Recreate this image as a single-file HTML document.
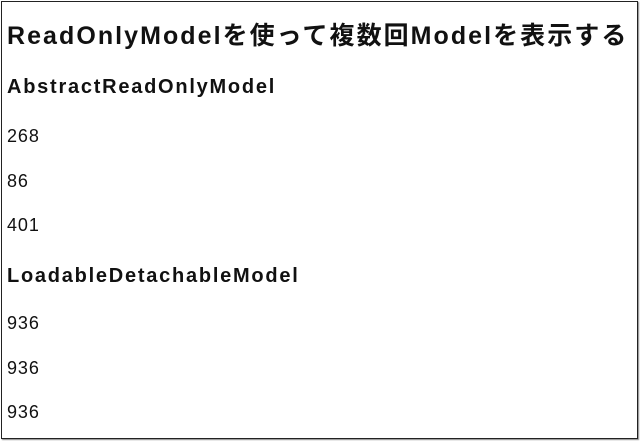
<!DOCTYPE html>
<html><head><meta charset="utf-8"><style>
html,body{margin:0;padding:0;background:#fff;width:642px;height:442px;overflow:hidden}
.frame{position:absolute;left:1px;top:1px;width:635px;height:436px;border:1px solid #222;box-shadow:1px 1px 1px #888}
div.t{position:absolute;left:7px;white-space:nowrap;color:#111;font-family:"Liberation Sans","Noto Sans CJK JP",sans-serif}
.h1{font-size:25px;font-weight:bold;letter-spacing:2.05px}
.h3{font-size:20px;font-weight:bold;letter-spacing:1.75px}
.n{font-size:18px;letter-spacing:0.9px}
</style></head><body>
<div class="frame"></div>
<div class="t h1" style="top:16px">ReadOnlyModelを使って複数回Modelを表示する</div>
<div class="t h3" style="top:76px">AbstractReadOnlyModel</div>
<div class="t n" style="top:126px">268</div>
<div class="t n" style="top:171px">86</div>
<div class="t n" style="top:215px">401</div>
<div class="t h3" style="top:265px">LoadableDetachableModel</div>
<div class="t n" style="top:313px">936</div>
<div class="t n" style="top:358px">936</div>
<div class="t n" style="top:402px">936</div>
</body></html>
